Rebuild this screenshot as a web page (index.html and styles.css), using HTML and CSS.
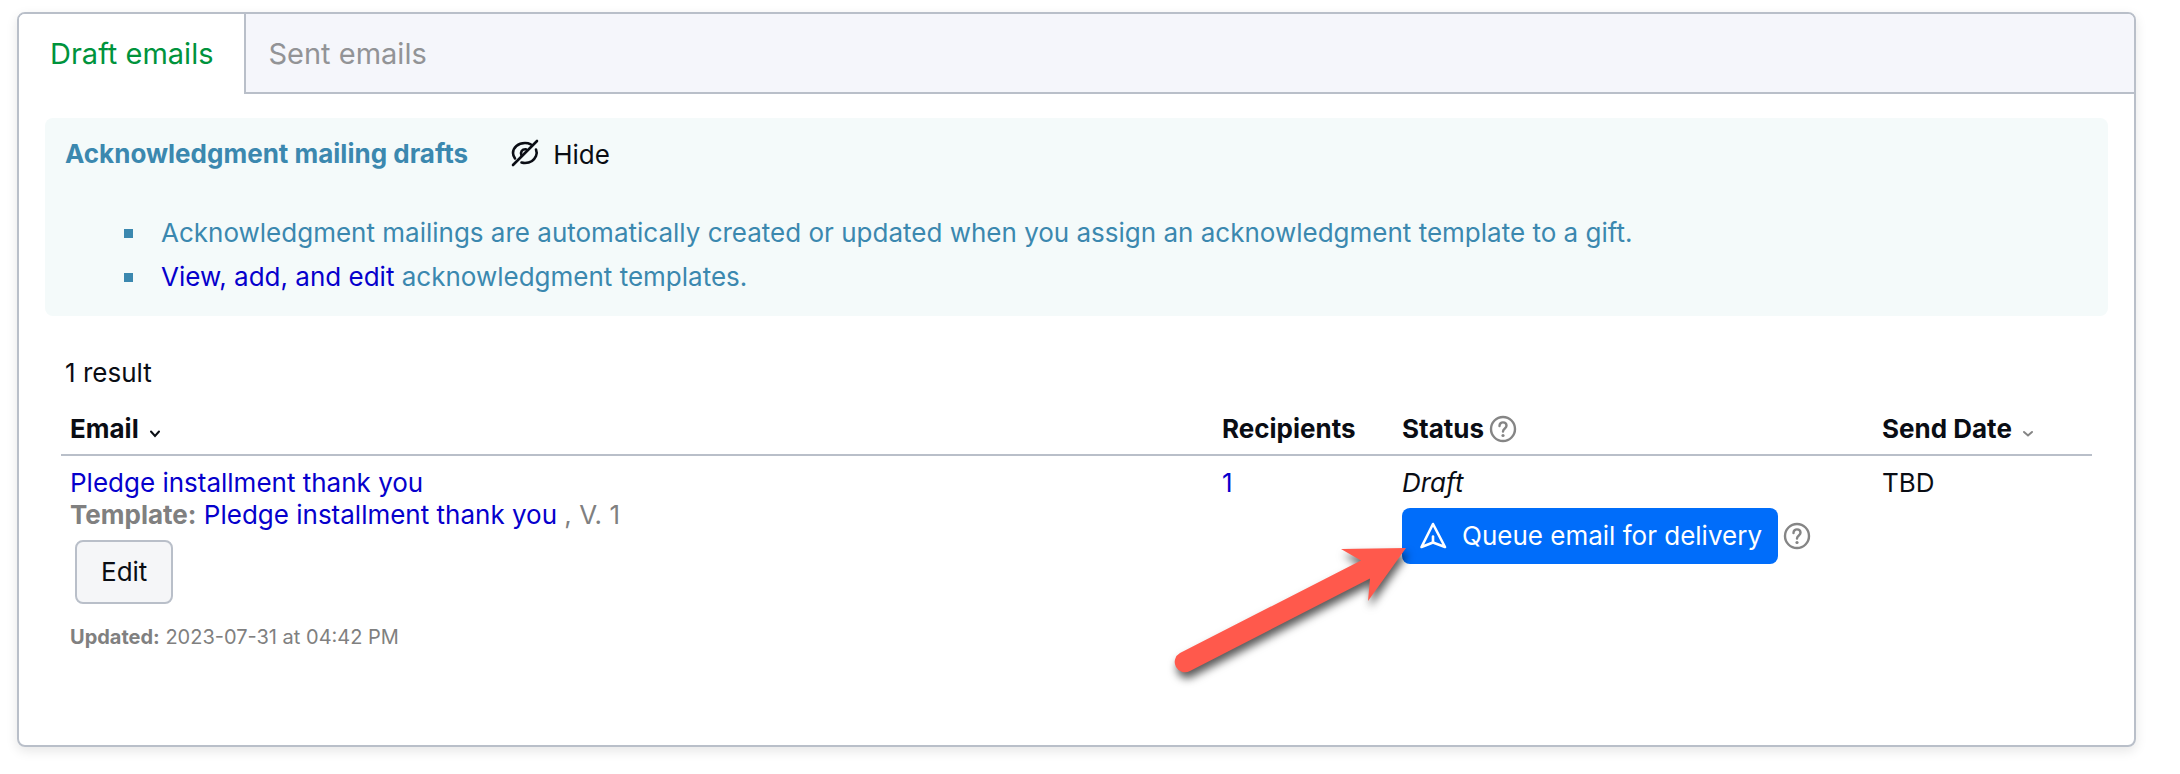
FILE: index.html
```html
<!DOCTYPE html>
<html lang="en">
<head>
    <meta charset="UTF-8">
    <meta name="viewport" content="width=device-width, initial-scale=1.0">
    <title>Emails</title>
    <link rel="stylesheet" href="styles.css">
</head>
<body>
    <div class="panel">
        <nav class="tabs">
            <a href="#drafts" class="tab active">Draft emails</a>
            <a href="#sent" class="tab">Sent emails</a>
        </nav>

        <div class="info-box">
            <div class="info-header">
                <h2>Acknowledgment mailing drafts</h2>
                <button type="button" class="hide-btn">
                    <svg width="28" height="28" viewBox="0 0 28 28" fill="none" stroke="currentColor" stroke-width="2.6" stroke-linecap="round">
                        <path d="M2 26L26 2"/>
                        <path d="M4 19.500C2.500 17.500 2 16 2 14C2 8.500 7 4 14 4C16 4 18 4.400 19.800 5.300"/>
                        <path d="M25 10.500C26 13 26 15 25 17C23 21.500 18.500 24 14 24C12.800 24 11.600 23.800 10.500 23.500"/>
                        <path d="M10.500 16.500C9 13 11 10 15 10.300"/>
                    </svg>
                    Hide
                </button>
            </div>
            <ul>
                <li>Acknowledgment mailings are automatically created or updated when you assign an acknowledgment template to a gift.</li>
                <li><a href="#templates">View, add, and edit</a> acknowledgment templates.</li>
            </ul>
        </div>

        <div class="results">
            <p class="count">1 result</p>
            <table>
                <thead>
                    <tr>
                        <th class="col-email">Email
                            <svg class="sort" width="12" height="8" viewBox="0 0 12 8" fill="none" stroke="currentColor" stroke-width="2" stroke-linecap="round"><path d="M2 1.500L6 6L10 1.500"/></svg>
                        </th>
                        <th class="col-recipients">Recipients</th>
                        <th class="col-status"><div class="with-help">Status
                            <svg class="help" width="28" height="28" viewBox="0 0 28 28" fill="none" stroke="currentColor" stroke-width="2.400" stroke-linecap="round"><circle cx="14" cy="14" r="12"/><path d="M10.500 11C10.500 6 17.500 6.500 17.500 10.800C17.500 13.500 14 13.500 14 16.500"/><circle cx="14" cy="20.500" r="1.600" fill="currentColor" stroke="none"/></svg>
                        </div></th>
                        <th class="col-date">Send Date
                            <svg class="sort muted" width="12" height="8" viewBox="0 0 12 8" fill="none" stroke="currentColor" stroke-width="2" stroke-linecap="round"><path d="M2 2L6 5.500L10 2"/></svg>
                        </th>
                    </tr>
                </thead>
                <tbody>
                    <tr>
                        <td>
                            <a href="#email">Pledge installment thank you</a>
                            <div class="template"><b>Template:</b> <a href="#template">Pledge installment thank you</a> , V. 1</div>
                            <button type="button" class="edit-btn">Edit</button>
                            <div class="updated"><b>Updated:</b> 2023-07-31 at 04:42 PM</div>
                        </td>
                        <td><a href="#recipients">1</a></td>
                        <td>
                            <em>Draft</em>
                            <div class="with-help queue">
                                <button type="button" class="queue-btn">
                                    <svg width="28" height="28" viewBox="0 0 28 28" fill="none" stroke="currentColor" stroke-width="2.600" stroke-linecap="round" stroke-linejoin="round"><path d="M13 2L25 25L13 20.500L1.500 25Z"/><path d="M13 20V14.500"/></svg>
                                    Queue email for delivery
                                </button>
                                <svg class="help" width="28" height="28" viewBox="0 0 28 28" fill="none" stroke="currentColor" stroke-width="2.400" stroke-linecap="round"><circle cx="14" cy="14" r="12"/><path d="M10.500 11C10.500 6 17.500 6.500 17.500 10.800C17.500 13.500 14 13.500 14 16.500"/><circle cx="14" cy="20.500" r="1.600" fill="currentColor" stroke="none"/></svg>
                                <svg class="arrow" width="250" height="150" viewBox="0 0 250 150" fill="#ff594c"><path d="M236 8L171 9L191 20.500L10 113A10 10 0 0 0 20 131L200 38.500L198 61Z"/></svg>
                            </div>
                        </td>
                        <td>TBD</td>
                    </tr>
                </tbody>
            </table>
        </div>
    </div>
</body>
</html>
```

FILE: styles.css
```css
* {
    box-sizing: border-box;
}
body {
    font-family: Inter, sans-serif;
    font-size: 26px;
    line-height: 32px;
    color: #0a0d14;
    background: #fff;
    margin: 0;
    padding: 12px 44px 28px 17px;
}
a {
    color: #0600cc;
    text-decoration: none;
}
button {
    font: inherit;
    cursor: pointer;
}
.panel {
    border: 2px solid #b9bfc9;
    border-radius: 8px;
    padding-bottom: 92px;
    box-shadow: 0 4px 12px rgba(0,0,0,0.1);
}
.tabs {
    display: flex;
    background: #f5f6fb;
    border-radius: 6px 6px 0 0;
    box-shadow: inset 0 -2px #b9bfc9;
}
.tab {
    padding: 24px 22px;
    font-size: 29px;
    color: #929396;
}
.tab.active {
    padding: 24px 31px;
    color: #00933c;
    background: #fff;
    border-right: 2px solid #b9bfc9;
    border-radius: 6px 0 0 0;
}
.info-box {
    margin: 24px 26px 0;
    padding: 19px 20px 17px;
    background: #f4fafa;
    border-radius: 8px;
    color: #3b88af;
}
.info-header {
    display: flex;
    align-items: center;
    gap: 43px;
}
.info-header h2 {
    margin: 0;
    font-size: 26px;
}
.hide-btn {
    display: flex;
    align-items: center;
    gap: 14px;
    padding: 2px 0 0;
    color: #0a0d14;
    background: none;
    border: none;
}
.hide-btn svg {
    margin-bottom: 4px;
}
.info-box ul {
    margin: 40px 0 0;
    padding-left: 59px;
    list-style: none;
    line-height: 44px;
}
.info-box li {
    display: flex;
    align-items: center;
    white-space: pre-wrap;
}
.info-box li::before {
    content: "";
    width: 9px;
    height: 9px;
    margin-right: 28px;
    background: #3b88af;
}
.results {
    padding: 41px 42px 0;
}
.count {
    margin: 0 4px 24px;
}
table {
    width: 100%;
    table-layout: fixed;
    border-collapse: collapse;
}
th, td {
    padding: 11px 9px 0;
    text-align: left;
    vertical-align: top;
}
th {
    padding: 0 9px 9px;
    border-bottom: 2px solid #b9bfc9;
}
.col-recipients {
    width: 180px;
}
.col-status {
    width: 480px;
}
.col-date {
    width: 219px;
}
.sort {
    margin-left: 4px;
}
.muted, .help {
    color: #858585;
}
.template, .updated {
    color: #808080;
}
.with-help {
    display: flex;
    align-items: center;
    gap: 5px;
}
.edit-btn {
    display: block;
    margin: 9px 5px 17px;
    padding: 14px 24px;
    color: #0a0d14;
    background: #f5f6f8;
    border: 2px solid #b9bfc9;
    border-radius: 8px;
}
.updated {
    font-size: 20px;
}
.queue {
    position: relative;
    margin-top: 9px;
}
.queue-btn {
    display: flex;
    align-items: center;
    gap: 14px;
    padding: 12px 16px 12px 18px;
    color: #fff;
    background: #006dfa;
    border: none;
    border-radius: 8px;
    white-space: nowrap;
}
.arrow {
    position: absolute;
    left: -232px;
    top: 32px;
    overflow: visible;
    filter: drop-shadow(2px 6px 4px rgba(0,0,0,0.65));
}
```
